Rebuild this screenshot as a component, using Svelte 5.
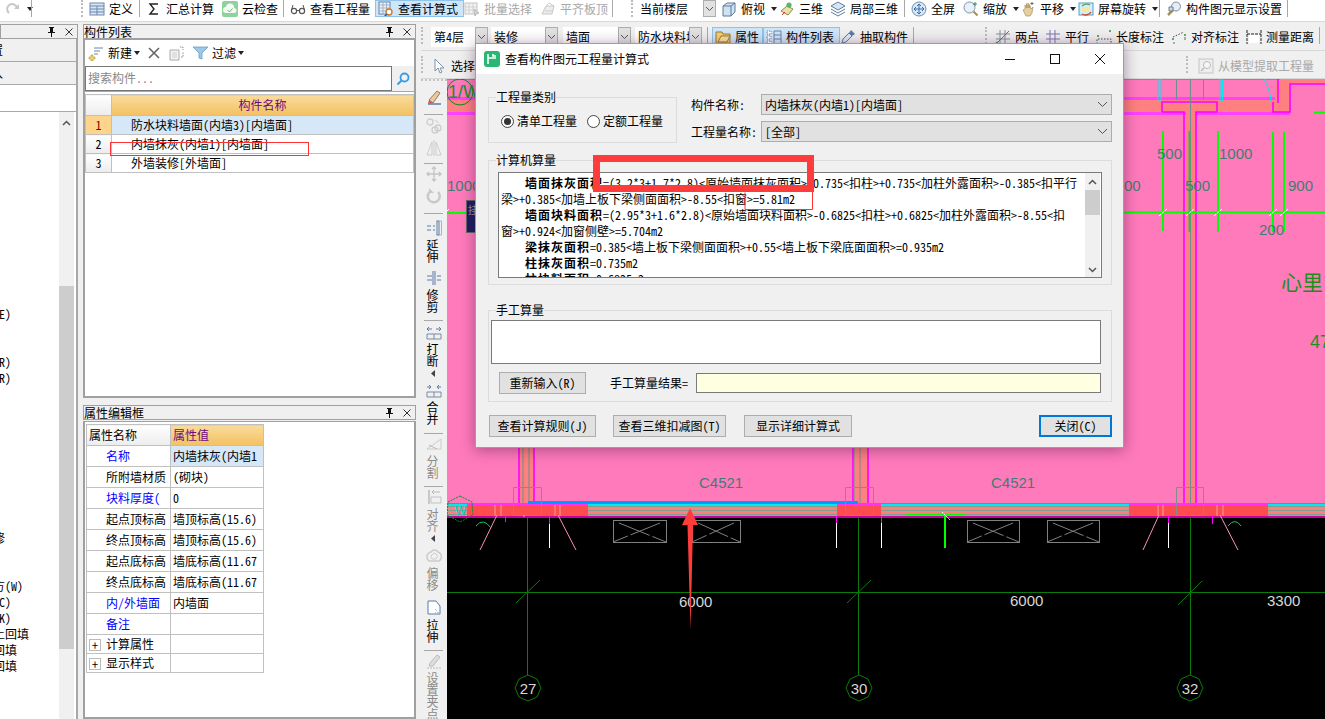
<script>
  // toolbar data: x is the left edge in page pixels, width comes from the next item
  const icons = {
    redo: '<path d="M4 12a5 5 0 1 1 8-5" fill="none" stroke="#c8c8c8" stroke-width="2"/><path d="M14 3v5h-5z" fill="#c8c8c8"/>',
    def: '<rect x="1" y="2" width="14" height="12" fill="#dbe6f4" stroke="#6b86ad"/><path d="M1 5h14M1 8h14M1 11h14M8 5v9" stroke="#6b86ad" fill="none"/>',
    sigma: '<path d="M12 3H4l4 5-4 5h8" fill="none" stroke="#222" stroke-width="1.4"/>',
    cloud: '<rect x="0" y="0" width="16" height="16" rx="2" fill="#8fd39c"/><path d="M4 12a3 3 0 0 1 0-6 4 4 0 0 1 8 1 2.5 2.5 0 0 1 0 5z" fill="#f4fbf5"/><path d="M5.5 9l2 2 3-3.5" stroke="#62b874" fill="none"/>',
    glasses: '<circle cx="4" cy="10" r="2.6" fill="none" stroke="#555" stroke-width="1.2"/><circle cx="12" cy="10" r="2.6" fill="none" stroke="#555" stroke-width="1.2"/><path d="M6.5 9.5h3M1.5 9L3 4M14.5 9L13 4" stroke="#555" fill="none"/>',
    calc: '<rect x="1" y="1" width="11" height="12" fill="#eef3fa" stroke="#6c84a6"/><path d="M1 4h11M1 7h11M1 10h11M5 1v12M8.500 1v12" stroke="#9fb1c9"/><circle cx="11" cy="11" r="3" fill="#fff" stroke="#c87a1c" stroke-width="1.300"/><path d="M9 13l-3 3" stroke="#3a5a8c" stroke-width="1.600"/>',
    batch: '<rect x="1" y="2" width="12" height="11" fill="#f2f2f2" stroke="#c4c4c4"/><path d="M1 6h12M1 9h12M5 2v11M9 2v11" stroke="#d2d2d2"/><path d="M10 8l5 4-3 .5-1 2.500z" fill="#d8d8d8" stroke="#bbb"/>',
    slab: '<path d="M2 13l4-8h8l-2 8z" fill="#ececec" stroke="#c8c8c8"/><path d="M6 5l3-3 5 3M5 10h8" stroke="#cfcfcf" fill="none"/>',
    box: '<path d="M2 5l4-3h8v9l-4 4H2z" fill="#cfe2f3" stroke="#5f7896"/><path d="M2 5h8v10M10 5l4-3" fill="none" stroke="#5f7896"/>',
    three: '<path d="M2 10l6-5 6 3-5 6z" fill="#e7e2a8" stroke="#8a8a50"/><circle cx="10" cy="4" r="2.600" fill="#59b56a"/><path d="M3 14l3-3" stroke="#c0392b"/>',
    iso: '<path d="M8 1l7 4-7 4-7-4z" fill="#d8e6f3" stroke="#5f7f9f"/><path d="M1 8l7 4 7-4M1 11l7 4 7-4" fill="none" stroke="#5f7f9f"/>',
    full: '<circle cx="8" cy="8" r="7" fill="#d8e8f8" stroke="#6f8fb0"/><path d="M8 3v10M3 8h10" stroke="#3a6ea5"/><path d="M6 5l2-2 2 2M6 11l2 2 2-2M5 6L3 8l2 2M11 6l2 2-2 2" fill="none" stroke="#3a6ea5"/>',
    zoom: '<circle cx="6.500" cy="6.500" r="5.500" fill="#e8f0f8" stroke="#7f93a8"/><path d="M10.500 10.500l4 4" stroke="#b08b4a" stroke-width="2"/><path d="M12 1v4M10 3h4" stroke="#3a8a4a"/>',
    hand: '<path d="M3 9l2-1V4l1.500 3V2.500L8 7V2l1.500 5V3.500L11 8l2-2-1 6-2 3H6z" fill="#e5cf9c" stroke="#a98f58" stroke-width=".7"/><path d="M12 1v3M10.500 2.500h3" stroke="#666"/>',
    rot: '<rect x="1" y="2" width="14" height="12" fill="#d6ecf8" stroke="#4ea0c8"/><path d="M4 6h8v5H4z" fill="#f4e9a4"/><path d="M13 11a6 5 0 0 1-9 2" fill="none" stroke="#d0492f" stroke-width="1.400"/><path d="M4 5a6 5 0 0 1 8-1" fill="none" stroke="#59a85f" stroke-width="1.400"/>',
    show: '<circle cx="10" cy="5.500" r="4.500" fill="#e6edf5" stroke="#7f8fa0"/><path d="M2 14l5-5" stroke="#a98f58" stroke-width="2.500"/><path d="M3 6h4v4H3z" fill="#cfd8e3" stroke="#6d7c8c"/>',
    attr: '<path d="M1 3h6l1 2h7v9H1z" fill="#f4cf75" stroke="#9a7a2e"/><path d="M3 13l3-6h9l-3 6z" fill="#f9e2a0" stroke="#9a7a2e"/>',
    list: '<path d="M1 2h4v3H1zM1 7h4v3H1zM1 12h4v3H1z" fill="#fff" stroke="#6d84a6" stroke-dasharray="1 1"/><path d="M8 2h7v13H8zM8 6h7M8 10h7" fill="none" stroke="#6d84a6"/>',
    pipette: '<path d="M2 14l1-4 6-6 3 3-6 6z" fill="#dceaf6" stroke="#5a7ca8"/><path d="M9 4l2-3 4 4-3 2z" fill="#5a7ca8"/>',
    two: '<path d="M1 5h14M1 10h14M5 1v14M10 1v14" stroke="#8a8f9f"/><path d="M2 14L14 2" stroke="#c8503c"/><circle cx="2" cy="14" r="1.500" fill="#5aa05a"/>',
    par: '<path d="M1 5h14M1 10h14M5 1v14M10 1v14" stroke="#7d76b0"/>',
    len: '<path d="M1 15v-5h14v5" fill="none" stroke="#444" stroke-dasharray="1.500 1.500"/><rect x="1" y="6" width="2" height="2" fill="#5fae5f"/><rect x="13" y="1" width="2" height="2" fill="#5fae5f"/>',
    ali: '<path d="M2 8l11-5" stroke="#444" stroke-dasharray="1.500 1.500" fill="none"/><rect x="1" y="9" width="2" height="2" fill="#5fae5f"/><rect x="13" y="5" width="2" height="2" fill="#5fae5f"/><path d="M3 13v2M14 8v3" stroke="#666"/>',
    meas: '<path d="M1 1v14M15 1v14M1 5h14" stroke="#222" fill="none" stroke-dasharray="3 1"/><rect x="3" y="6" width="10" height="8" fill="#fff"/>',
    arrow: '<path d="M4 1v12l3-3 2 5 2-1-2-4h4z" fill="#fff" stroke="#7d93b0"/>',
    model: '<rect x="1" y="1" width="14" height="14" fill="#eee" stroke="#c4c4c4"/><circle cx="9" cy="7" r="3.500" fill="#f6f6f6" stroke="#bbb"/><path d="M6 10l-3 3" stroke="#bbb" stroke-width="1.500"/>',
    brush: '<path d="M3 11l8-9 3 2-7 10z" fill="#e9c9a0" stroke="#9a7a5a"/><path d="M2 15h13" stroke="#5a7ca8" stroke-width="1.500"/><path d="M3 11l4 3-5 1z" fill="#d9534f"/>',
    rings: '<circle cx="4" cy="4" r="3" fill="none" stroke="#ccc" stroke-width="1.300"/><circle cx="9" cy="12" r="3" fill="none" stroke="#ccc" stroke-width="1.300"/><circle cx="12" cy="10" r="3" fill="none" stroke="#ccc" stroke-width="1.300"/><path d="M9 2l4 3" stroke="#ccc"/>',
    mirror: '<path d="M6 2L1 15h5zM10 2l5 13h-5zM8 0v16" fill="none" stroke="#ccc"/>',
    move: '<path d="M8 1v14M1 8h14M6 3l2-2 2 2M6 13l2 2 2-2M3 6L1 8l2 2M13 6l2 2-2 2" fill="none" stroke="#c4c4c4" stroke-width="1.300"/>',
    spin: '<path d="M12 4a6 6 0 1 1-7-1" fill="none" stroke="#c8c8c8" stroke-width="2.500"/><path d="M3 0v5h5z" fill="#c8c8c8"/>',
    extend: '<path d="M1 6h4M1 10h4M7 6h2M7 10h2" stroke="#5a7ca8"/><rect x="11" y="1" width="2" height="14" fill="none" stroke="#5a7ca8"/><path d="M13.500 1h2v14h-2" fill="none" stroke="#9fb6d2"/>',
    trim: '<path d="M1 6h5M1 10h5M11 6h4M11 10h4" stroke="#5a7ca8"/><path d="M7 1v14M9 1v14" stroke="#5a7ca8"/>',
    cut: '<path d="M1 5h5M3 3L1 5l2 2M15 5h-5M13 3l2 2-2 2" fill="none" stroke="#5a7ca8"/><path d="M1 10h14v5H1zM8 10v5" fill="none" stroke="#7a8aa0"/>',
    merge: '<path d="M5 5H1M3 3l2 2-2 2M11 5h4M13 3l-2 2 2 2" fill="none" stroke="#5a7ca8"/><path d="M1 10h14v5H1zM8 10v5" fill="none" stroke="#7a8aa0"/>',
    split: '<path d="M1 13L15 3M1 13h14M15 3v10" fill="none" stroke="#ccc"/><path d="M3 9l8 4" stroke="#bbb"/>',
    align: '<path d="M3 1v14" stroke="#bbb" stroke-width="1.500"/><path d="M5 8h10v6H5z" fill="none" stroke="#c2c2c2"/><path d="M14 3H6M8 1L6 3l2 2" fill="none" stroke="#bbb"/>',
    off: '<path d="M3 13a5 5 0 0 1 2-9 4 4 0 0 1 7 0 5 5 0 0 1 1 9z" fill="none" stroke="#ccc" stroke-width="1.500"/><path d="M6 11a3 3 0 0 1 1-5 2 2 0 0 1 3 0 3 3 0 0 1 0 5z" fill="none" stroke="#ccc"/>',
    stretch: '<path d="M2 1h8l4 5v8H2z" fill="#fff" stroke="#5a7ca8"/><path d="M9 9l5 5M9 13h5" stroke="#8fa6c4" stroke-dasharray="1 1"/>',
    pin2: '<path d="M3 13l1-3 7-8 3 2-7 9z" fill="#ddd" stroke="#bbb"/><path d="M1 15h14" stroke="#bbb" stroke-dasharray="2 1"/>'
  };

  const withWidths = (items, end) =>
    items.map((it, i) => ({ ...it, w: (items[i + 1] ? items[i + 1].x : end) - it.x }));

  const row1 = withWidths([
    { x: 0, t: 'gap' }, { x: 5, icon: 'redo', label: '', caret: true, dis: true }, { x: 31, t: 'sep' },
    { x: 81, t: 'grip' }, { x: 89, icon: 'def', label: '定义' }, { x: 139, t: 'sep' },
    { x: 146, icon: 'sigma', label: '汇总计算' }, { x: 222, icon: 'cloud', label: '云检查' }, { x: 283, t: 'sep' },
    { x: 290, icon: 'glasses', label: '查看工程量' }, { x: 375, icon: 'calc', label: '查看计算式', on: true },
    { x: 464, icon: 'batch', label: '批量选择', dis: true }, { x: 540, icon: 'slab', label: '平齐板顶', dis: true },
    { x: 612, t: 'sep' }, { x: 631, t: 'grip' }, { x: 637, t: 'combo', label: '当前楼层' }, { x: 721, icon: 'box', label: '俯视', caret: true },
    { x: 779, icon: 'three', label: '三维' }, { x: 830, icon: 'iso', label: '局部三维' }, { x: 904, t: 'sep' },
    { x: 911, icon: 'full', label: '全屏' }, { x: 963, icon: 'zoom', label: '缩放', caret: true },
    { x: 1020, icon: 'hand', label: '平移', caret: true }, { x: 1078, icon: 'rot', label: '屏幕旋转', caret: true },
    { x: 1159, t: 'sep' }, { x: 1166, icon: 'show', label: '构件图元显示设置' }, { x: 1287, t: 'sep' }
  ], 1325);

  const row2 = withWidths([
    { x: 421, t: 'grip' }, { x: 431, t: 'combo', label: '第4层', cw: 57 }, { x: 491, t: 'combo', label: '装修', cw: 67 },
    { x: 563, t: 'combo', label: '墙面', cw: 68 }, { x: 635, t: 'combo', label: '防水块料墙', cw: 67 }, { x: 707, t: 'sep' },
    { x: 712, icon: 'attr', label: '属性', on: true }, { x: 763, icon: 'list', label: '构件列表', on: true },
    { x: 840, icon: 'pipette', label: '抽取构件' }, { x: 913, t: 'sep' }, { x: 985, t: 'grip' },
    { x: 995, icon: 'two', label: '两点' }, { x: 1045, icon: 'par', label: '平行' }, { x: 1096, icon: 'len', label: '长度标注' },
    { x: 1171, icon: 'ali', label: '对齐标注' }, { x: 1246, icon: 'meas', label: '测量距离' }, { x: 1319, t: 'sep' }
  ], 1325);

  const row3 = withWidths([
    { x: 421, t: 'grip' }, { x: 431, icon: 'arrow', label: '选择' }, { x: 1186, t: 'grip' },
    { x: 1198, icon: 'model', label: '从模型提取工程量', dis: true }
  ], 1325);

  const vtools = [
    { h: 8 }, { h: 21, icon: 'brush' }, { h: 8, sep: true }, { h: 22, icon: 'rings' }, { h: 20, icon: 'mirror' },
    { h: 6, sep: true }, { h: 22, icon: 'move' }, { h: 22, icon: 'spin' }, { h: 6, sep: true }, { h: 4 },
    { h: 50, icon: 'extend', text: '延伸' }, { h: 46, icon: 'trim', text: '修剪' }, { h: 8, sep: true },
    { h: 58, icon: 'cut', text: '打断', caret: true }, { h: 48, icon: 'merge', text: '合并' }, { h: 6, sep: true },
    { h: 47, icon: 'split', text: '分割', dis: true }, { h: 6, sep: true },
    { h: 54, icon: 'align', text: '对齐', caret: true, dis: true }, { h: 52, icon: 'off', text: '偏移', dis: true, pad: true },
    { h: 52, icon: 'stretch', text: '拉伸', pad: true }, { h: 6, sep: true }, { h: 80, icon: 'pin2', text: '设置夹点', dis: true }
  ];

  // right-aligned remains of the tree behind the clipped left panel (22 rows of 16px)
  const tree = Array.from({ length: 23 }, () => ({ text: '', end: 0 }));
  tree[0] = { text: '(E)', end: 11 };
  tree[3] = { text: '(R)', end: 11 };
  tree[4] = { text: '(R)', end: 11 };
  tree[14] = { text: '装修', end: 5 };
  tree[17] = { text: '地方(W)', end: 23 };
  tree[18] = { text: '(C)', end: 11 };
  tree[19] = { text: '(K)', end: 11 };
  tree[20] = { text: '土回填', end: 29 };
  tree[21] = { text: '回填', end: 17 };
  tree[22] = { text: '回填', end: 17 };

  const parts = [
    { n: '防水块料墙面(内墙3)[内墙面]', on: true },
    { n: '内墙抹灰(内墙1)[内墙面]' },
    { n: '外墙装修[外墙面]' }
  ];

  const props = [
    { k: '名称', v: '内墙抹灰(内墙1', blue: true, on: true },
    { k: '所附墙材质', v: '(砌块)' },
    { k: '块料厚度(', v: '0', blue: true },
    { k: '起点顶标高', v: '墙顶标高(15.6)' },
    { k: '终点顶标高', v: '墙顶标高(15.6)' },
    { k: '起点底标高', v: '墙底标高(11.67' },
    { k: '终点底标高', v: '墙底标高(11.67' },
    { k: '内/外墙面', v: '内墙面', blue: true },
    { k: '备注', v: '', blue: true },
    { k: '计算属性', v: '', plus: true },
    { k: '显示样式', v: '', plus: true }
  ];

  const windows = [[613, 53], [692, 48], [967, 52], [1047, 52]];
  const grids = [
    { x: 528, n: '27' }, { x: 859, n: '30' }, { x: 1190, n: '32' }
  ];
  const ticks = [1163, 1190, 1218, 1273, 1284];
</script>

{#snippet ico(name)}
  <svg class="ico" viewBox="0 0 16 16" width="16" height="16">{@html icons[name]}</svg>
{/snippet}

{#snippet bar(items)}
  {#each items as it}
    {#if it.t === 'sep'}
      <span class="sep" style="width:{it.w}px"></span>
    {:else if it.t === 'grip'}
      <span class="grip" style="width:{it.w}px"></span>
    {:else if it.t === 'gap'}
      <span style="width:{it.w}px"></span>
    {:else if it.t === 'combo'}
      <span class="slot" style="width:{it.w}px">
        <span class="combo" style="width:{it.cw || 79}px"><span class="combo-t">{it.label}</span><span class="combo-b"><svg width="9" height="6" viewBox="0 0 9 6"><path d="M1 1l3.500 3.500L8 1" fill="none" stroke="#555"/></svg></span></span>
      </span>
    {:else}
      <span class="slot" style="width:{it.w}px">
        <span class="btn" class:on={it.on} class:dis={it.dis}>
          {@render ico(it.icon)}
          {#if it.label}<span>{it.label}</span>{/if}
          {#if it.caret}<i class="caret"></i>{/if}
        </span>
      </span>
    {/if}
  {/each}
{/snippet}

{#snippet title(text)}
  <div class="ptitle">
    <span>{text}</span>
    <svg class="pin" width="9" height="10" viewBox="0 0 9 10"><path d="M2 0h5v1H6v4h2v1H5v4H4V6H1V5h2V1H2z" fill="#111"/></svg>
    <svg class="px" width="8" height="8" viewBox="0 0 8 8"><path d="M.5.5l7 7M7.500.5l-7 7" stroke="#333"/></svg>
  </div>
{/snippet}

<div class="app">
  <div class="top">{@render bar(row1)}</div>

  <div class="main">
    <aside class="left">
      {@render title('')}
      <div class="lrow clip"><span class="cut12">配置</span></div>
      <div class="lrow clip"><span class="cut12 small">入</span></div>
      <div class="lwhite"></div>
      <div class="tree">
        <div class="tree-list">
          {#each tree as r}
            <div class="tree-row" style="width:{r.end}px"><span>{r.text}</span></div>
          {/each}
        </div>
        <div class="lscroll">
          <svg class="up" width="9" height="6" viewBox="0 0 9 6"><path d="M1 5l3.500-3.500L8 5" fill="none" stroke="#555" stroke-width="1.500"/></svg>
          <div class="lthumb"></div>
        </div>
      </div>
    </aside>

    <section class="mid">
      {@render title('构件列表')}
      <div class="panel list-panel">
        <div class="ptools">
          <svg class="ico" viewBox="0 0 16 16" width="16" height="16"><path d="M6 3h9M6 6h6M6 9h4" stroke="#6b86ad" fill="none"/><path d="M3 10h2v2h2v2H5v2H3v-2H1v-2h2z" fill="#f3d36b" stroke="#b59636" stroke-width=".6"/></svg>
          <span class="t-new">新建</span><i class="caret"></i>
          <svg class="t-x" width="12" height="12" viewBox="0 0 12 12"><path d="M1 1l10 10M11 1L1 11" stroke="#666" stroke-width="1.600"/></svg>
          <svg class="t-copy" viewBox="0 0 16 16" width="16" height="16"><path d="M1 5h9v10H1z" fill="#f4f4f4" stroke="#aaa"/><path d="M3 8h5M3 10h5M3 12h5" stroke="#ccc"/><path d="M11 2h3v3M12 12h2V7" fill="none" stroke="#7d93b0" stroke-dasharray="1.500 1"/></svg>
          <svg class="t-filter" viewBox="0 0 15 14" width="15" height="14"><path d="M0 1h15L9 7v6l-3-1V7z" fill="#9cc7e6" stroke="#6f9dc0" stroke-width=".8"/></svg>
          <span class="t-filt">过滤</span><i class="caret"></i>
        </div>
        <div class="psearch">
          <div class="sinput">搜索构件...</div>
          <div class="sbtn"><svg width="14" height="14" viewBox="0 0 14 14"><circle cx="8.500" cy="5.500" r="4" fill="none" stroke="#3c9be0" stroke-width="1.800"/><path d="M5.500 8.500l-4 4" stroke="#3c9be0" stroke-width="2"/></svg></div>
        </div>
        <table class="grid gl">
          <thead><tr><th class="num"></th><th class="gold">构件名称</th></tr></thead>
          <tbody>
            {#each parts as p, i}
              <tr class:sel={p.on}>
                <td class="num">{i + 1}</td>
                <td class="pname">{p.n}</td>
              </tr>
            {/each}
          </tbody>
        </table>
      </div>

      <div class="gap7"></div>
      {@render title('属性编辑框')}
      <div class="panel prop-panel">
        <table class="grid gp">
          <thead><tr><th class="pk0">属性名称</th><th class="gold left-t">属性值</th></tr></thead>
          <tbody>
            {#each props as p}
              <tr class:short={p.plus}>
                <td class="pk" class:blue={p.blue}>
                  {#if p.plus}<span class="plus">+</span><span class="plus-t">{p.k}</span>{:else}{p.k}{/if}
                </td>
                <td class="pv" class:sel-v={p.on}>{p.v}</td>
              </tr>
            {/each}
          </tbody>
        </table>
      </div>
    </section>

    <section class="right">
      <div class="tbar">{@render bar(row2)}</div>
      <div class="tbar t3">{@render bar(row3)}</div>
      <div class="work">
        <nav class="vbar">
          {#each vtools as v}
            {#if v.sep}
              <div class="vsep" style="height:{v.h}px"></div>
            {:else}
              <div class="vitem" class:dis={v.dis} class:pad={v.pad} style="height:{v.h}px">
                {#if v.icon}{@render ico(v.icon)}{/if}
                {#if v.text}<span class="vtext">{v.text}</span>{/if}
                {#if v.caret}<svg class="vcaret" width="4" height="7" viewBox="0 0 4 7"><path d="M4 0v7L0 3.500z" fill="#444"/></svg>{/if}
              </div>
            {/if}
          {/each}
        </nav>

        <svg class="cad" viewBox="447 79 878 640" width="878" height="640">
          <rect x="447" y="79" width="878" height="438" fill="#ff7abb"/>
          <rect x="447" y="517" width="878" height="202" fill="#000"/>
          <path d="M447 79.500h878" stroke="#8c8c8c"/>

          <!-- top wall band -->
          <rect x="447" y="100" width="840" height="12" fill="#ff8080"/>
          <rect x="447" y="97" width="838" height="3" fill="#ff40ff"/>
          <rect x="447" y="112" width="843" height="3" fill="#ff40ff"/>
          <rect x="1280" y="79" width="45" height="5" fill="#ff8080"/>
          <rect x="1275" y="84" width="15" height="28" fill="#ff8080"/>
          <path d="M1162 112v-10h55v10h-21v393M1162 112h22v393" fill="none" stroke="#f0f" stroke-width="1.600"/>
          <path d="M1273 102v10h17V84h35M1278 79v24" fill="none" stroke="#f0f" stroke-width="1.600"/>
          <rect x="1186" y="112" width="9" height="393" fill="#ff8080"/>
          <path d="M1190.500 79v426M1176.500 79v21M1203.500 79v21" stroke="#6f8f8f" fill="none"/>
          <path d="M1158 79v22M1161 79v22M1220 79v22M1222.500 79v22M1264 79q6 10 7 23" stroke="#00e8f0" fill="none"/>
          <path d="M1163 131v100M1218 131v101M1273 132v100M1284 132v100M1124 212.500h201M1314 112.500h11" stroke="#0f0" stroke-width="2" fill="none"/>
          <path d="M1189.500 131v101" stroke="#3fb050" stroke-width="2"/>
          {#each ticks as t}<path d="M{t - 4} 216l8-7" stroke="#fff" stroke-dasharray="3 1"/>{/each}

          <g class="dim">
            <text x="1157" y="159">500</text><text x="1219" y="159">1000</text><text x="1124" y="191">00</text>
            <text x="1185" y="191">500</text><text x="1288" y="191">900</text><text x="1259" y="235">200</text>
            <text x="447" y="191">1000</text><text x="699" y="488">C4521</text><text x="991" y="488">C4521</text>
          </g>
          <text class="big" x="1281" y="290">心里</text>
          <text class="green" x="1310" y="348">47</text>

          <!-- top left mark -->
          <circle cx="460" cy="92" r="13" fill="none" stroke="#0a8a2a"/>
          <text class="green" x="448" y="98">1/W</text>
          <rect x="447" y="212" width="20" height="2" fill="#0f0"/>
          <path d="M447 211l2-2" stroke="#fff"/>
          <rect x="466.500" y="200.500" width="10" height="32" fill="#1c1c5e" stroke="#666"/>
          <text class="nav" x="468" y="214">挂</text>

          <!-- wall columns into the bottom strip -->
          {#each [[526, 519, 534], [857, 853, 868]] as c}
            <rect x={c[1]} y="440" width={c[2] - c[1]} height="65" fill="#ff8080"/>
            <path d="M{c[1]} 440v65M{c[2]} 440v65" stroke="#f0f" stroke-width="1.600"/>
            <path d="M{c[0] - 3} 440v65M{c[0] + 3} 440v65" stroke="#6f8f8f"/>
          {/each}

          <rect x="447" y="503" width="878" height="14" fill="#ff30ff"/>
          <rect x="467" y="505" width="121" height="11" fill="#ff4d4d"/>
          <rect x="837" y="505" width="44" height="11" fill="#ff4d4d"/>
          <rect x="1129" y="505" width="139" height="11" fill="#ff4d4d"/>
          <rect x="447" y="504" width="20" height="13" fill="#ff7f7f"/>
          <rect x="588" y="504" width="249" height="13" fill="#ff7f7f"/>
          <rect x="881" y="504" width="248" height="13" fill="#ff7f7f"/>
          <rect x="1268" y="504" width="57" height="13" fill="#ff7f7f"/>
          <rect x="528" y="501" width="330" height="3" fill="#0099ff"/>
          {#each [[447, 467], [588, 837], [881, 1129], [1268, 1325]] as s}
            <path d="M{s[0]} 504.500H{s[1]}M{s[0]} 516.500H{s[1]}" stroke="#00e8f0"/>
            <path d="M{s[0]} 506.500H{s[1]}M{s[0]} 510.500H{s[1]}M{s[0]} 514.500H{s[1]}" stroke="#7f9f8f"/>
          {/each}
          <rect x="447" y="516" width="878" height="2" fill="#c800a0"/>
          <path d="M513.500 487.500h28v28h-28zM845.500 487.500h28v28h-28zM1176.500 487.500h27v28h-27z" fill="none" stroke="#8a8a8a"/>
          <path d="M524 515v2M495 505v11M501 505v11M555 505v11M560 505v11M1158 505v11M1163 505v11M1217 505v11M1223 505v11" stroke="#ffa0a0"/>

          <!-- end mark -->
          <path d="M460 496l12 6 1 13-13 7-13-7 1-13z" fill="none" stroke="#0a8a2a" stroke-dasharray="2 1"/>
          <text class="cw" x="455" y="515">W</text>

          <!-- below the wall -->
          <path d="M447 592.500h878M527.500 517v158M858.500 517v158M1190.500 517v158" stroke="#0a7a0a" fill="none"/>
          <path d="M516 603l24-23M847 603l24-23M1178 605l24-24" stroke="#0a7a0a"/>
          <path d="M497 515l-17 35M558 515l18 35M1159 515l-16 35M1220 515l18 35" stroke="#ff90b0"/>
          <path d="M549.500 524v24M836.500 523v25M881.500 523v25M1168.500 523v25" stroke="#fff"/>
          <path d="M505.500 516v6M549.500 516v8M836.500 516v7M881.500 516v7M1168.500 516v7M1212.500 516v8" stroke="#f0f"/>
          <path d="M476 526q7-9 15 2M1228 526q7-9 13 0" fill="none" stroke="#10c860"/>
          <path d="M906 514.500h60" stroke="#0f0" stroke-width="1.500"/>
          <path d="M945 515v33" stroke="#0f0" stroke-width="2"/>
          <path d="M942 512l8 8" stroke="#fff" stroke-dasharray="2 1"/>

          {#each windows as [x, w]}
            <g fill="none" stroke="#808080">
              <rect x={x + 0.5} y="520.500" width={w} height="22"/>
              <path d="M{x} 542L{x + w - 6} 523" stroke-dasharray="16 3 80"/>
              <path d="M{x + 6} 523L{x + w} 542" stroke-dasharray="33 3 80"/>
            </g>
          {/each}

          {#each grids as g}
            <path d="M{g.x} 675l9 4 4 9-4 9-9 4-9-4-4-9 4-9z" fill="none" stroke="#0a7a0a"/>
            <text class="wh" x={g.x} y="694" text-anchor="middle">{g.n}</text>
          {/each}
          <text class="wh" x="679" y="607">6000</text>
          <text class="wh" x="1010" y="606">6000</text>
          <text class="wh" x="1267" y="606">3300</text>

        </svg>
      </div>
    </section>
  </div>

  <div class="dialog">
    <header class="d-title">
      <svg width="16" height="16" viewBox="0 0 16 16"><rect width="16" height="16" rx="3" fill="#2bb673"/><path d="M4 3v10M4 7h8M9 3v2h3" stroke="#fff" stroke-width="1.600" fill="none"/></svg>
      <span class="d-name">查看构件图元工程量计算式</span>
      <div class="d-ctl">
        <svg width="10" height="10" viewBox="0 0 10 10"><path d="M0 5.500h10" stroke="#111"/></svg>
        <svg width="10" height="10" viewBox="0 0 10 10"><rect x=".5" y=".5" width="9" height="9" fill="none" stroke="#111"/></svg>
        <svg width="10" height="10" viewBox="0 0 10 10"><path d="M0 0l10 10M10 0L0 10" stroke="#111"/></svg>
      </div>
    </header>

    <div class="d-body">
      <div class="d-top">
        <fieldset class="g1">
          <legend>工程量类别</legend>
          <div class="radios">
            <label class="radio"><i class="dot on"></i>清单工程量</label>
            <label class="radio"><i class="dot"></i>定额工程量</label>
          </div>
        </fieldset>
        <div class="fields">
          <div class="field"><span class="flabel">构件名称:</span><div class="select"><span>内墙抹灰(内墙1)[内墙面]</span><svg width="11" height="7" viewBox="0 0 11 7"><path d="M1 1l4.500 4.500L10 1" fill="none" stroke="#555"/></svg></div></div>
          <div class="field"><span class="flabel">工程量名称:</span><div class="select"><span>[全部]</span><svg width="11" height="7" viewBox="0 0 11 7"><path d="M1 1l4.500 4.500L10 1" fill="none" stroke="#555"/></svg></div></div>
        </div>
      </div>

      <fieldset class="g2">
        <legend>计算机算量</legend>
        <div class="calc">
          <div class="calc-text">
            <div class="ln ind"><b>墙面抹灰面积</b>=(3.2*3+1.7*2.8)&lt;原始墙面抹灰面积&gt;-0.735&lt;扣柱&gt;+0.735&lt;加柱外露面积&gt;-0.385&lt;扣平行</div>
            <div class="ln">梁&gt;+0.385&lt;加墙上板下梁侧面面积&gt;-8.55&lt;扣窗&gt;=5.81m2</div>
            <div class="ln ind"><b>墙面块料面积</b>=(2.95*3+1.6*2.8)&lt;原始墙面块料面积&gt;-0.6825&lt;扣柱&gt;+0.6825&lt;加柱外露面积&gt;-8.55&lt;扣</div>
            <div class="ln">窗&gt;+0.924&lt;加窗侧壁&gt;=5.704m2</div>
            <div class="ln ind"><b>梁抹灰面积</b>=0.385&lt;墙上板下梁侧面面积&gt;+0.55&lt;墙上板下梁底面面积&gt;=0.935m2</div>
            <div class="ln ind"><b>柱抹灰面积</b>=0.735m2</div>
            <div class="ln ind"><b>柱块料面积</b>=0.6825m2</div>
          </div>
          <div class="calc-scroll">
            <svg width="9" height="6" viewBox="0 0 9 6"><path d="M1 5l3.500-3.500L8 5" fill="none" stroke="#555" stroke-width="1.500"/></svg>
            <div class="calc-thumb"></div>
            <svg class="down" width="9" height="6" viewBox="0 0 9 6"><path d="M1 1l3.500 3.500L8 1" fill="none" stroke="#555" stroke-width="1.500"/></svg>
          </div>
        </div>
      </fieldset>

      <fieldset class="g3">
        <legend>手工算量</legend>
        <div class="manual"></div>
        <div class="manual-row">
          <button class="wbtn redo">重新输入(R)</button>
          <span class="res">手工算量结果=</span>
          <div class="resbox"></div>
        </div>
      </fieldset>

      <div class="d-foot">
        <button class="wbtn b1">查看计算规则(J)</button>
        <button class="wbtn b2">查看三维扣减图(T)</button>
        <button class="wbtn b3">显示详细计算式</button>
        <button class="wbtn close">关闭(C)</button>
      </div>
    </div>
  </div>

  <!-- red marks drawn over the screenshot -->
  <svg class="marks" viewBox="0 0 1325 719" width="1325" height="719">
    <rect x="596.500" y="158.500" width="214" height="30" fill="none" stroke="#ff3c3c" stroke-width="7"/>
    <path d="M745 192.500v17h67.500V192" fill="none" stroke="#f33"/>
    <rect x="110.500" y="142.500" width="198" height="13" fill="none" stroke="#f33"/>
    <path d="M690 508l8 17h-5l-2.500 105-3-105h-5.500z" fill="#ff3c3c"/>
  </svg>
</div>

<style>
  :global(body) { margin: 0; background: #f0f0f0; }

  .app {
    position: relative;
    width: 1325px;
    height: 719px;
    overflow: hidden;
    background: #f0f0f0;
    color: #000;
    font: 12px/14px "Noto Sans Mono CJK SC", "Noto Sans CJK SC", "Liberation Mono", monospace;
  }
  .ico { flex: none; display: block; }

  .top {
    display: flex;
    height: 17px;
    padding-bottom: 4px;
    border-bottom: 1px solid #d8d8d8;
    background: #fff;
  }
  .slot { display: flex; flex: none; align-items: flex-start; height: 100%; }
  .btn { display: inline-flex; align-items: center; gap: 4px; white-space: nowrap; height: 100%; }
  .btn.on { background: #cfe5f8; outline: 1px solid #8fc3ea; outline-offset: -1px; padding: 0 3px; align-self: stretch; flex: 1; }
  .btn.dis { color: #a8a8a8; }
  .caret { width: 0; height: 0; border: 3.5px solid transparent; border-top: 4px solid #222; border-bottom: 0; margin-left: 2px; flex: none; }
  .sep { flex: none; height: 17px; box-sizing: border-box; border-left: 1px solid #a8a8a8; }
  .grip { flex: none; height: 17px; box-sizing: border-box; border-left: 2px dotted #bcbcbc; }
  .combo { display: flex; height: 17px; background: #fff; align-items: center; }
  .combo-t { flex: 1; padding-left: 3px; overflow: hidden; white-space: nowrap; }
  .combo-b { display: flex; align-items: center; justify-content: center; width: 13px; height: 100%; flex: none; background: #e1e1e1; border: 1px solid #adadad; box-sizing: border-box; }

  .main { display: flex; height: 697px; }

  /* left clipped tree panel */
  .left { width: 78px; flex: none; padding-top: 2px; box-sizing: border-box; }
  .ptitle {
    display: flex;
    align-items: center;
    height: 15px;
    box-sizing: border-box;
    border: 1px solid #a0a0a0;
    background: #f0f0f0;
    line-height: 13px;
  }
  .ptitle span { flex: 1; }
  .pin { margin-right: 9px; }
  .px { margin-right: 4px; }
  .lrow { height: 22px; border-bottom: 1px solid #a8a8a8; border-right: 2px solid #a8a8a8; overflow: hidden; line-height: 22px; box-sizing: content-box; }
  .cut12 { display: block; margin-left: -21px; white-space: nowrap; }
  .cut12.small { margin-left: -9px; }
  .lwhite { height: 26px; background: #fff; border-right: 2px solid #a8a8a8; border-bottom: 1px solid #a8a8a8; }
  .tree { display: flex; height: 607px; background: #fff; border-right: 2px solid #a8a8a8; padding-right: 2px; }
  .tree-list { flex: 1; min-width: 0; padding-top: 194px; overflow: hidden; }
  .tree-row { display: flex; justify-content: flex-end; height: 16px; line-height: 16px; white-space: nowrap; overflow: hidden; }
  .tree-row span { flex: none; }
  .lscroll { width: 15px; flex: none; background: #f0f0f0; display: flex; flex-direction: column; align-items: center; padding-top: 8px; box-sizing: border-box; }
  .lthumb { width: 100%; height: 363px; margin-top: 160px; background: #cdcdcd; }

  /* middle panels */
  .mid { width: 333px; margin-left: 5px; flex: none; padding-top: 2px; box-sizing: border-box; display: flex; flex-direction: column; }
  .panel { border: 2px solid #a0a0a0; border-top-width: 1px; background: #fff; box-sizing: border-box; }
  .list-panel { height: 359px; }
  .gap7 { height: 7px; flex: none; }
  .prop-panel { flex: 1; margin-top: 1px; padding: 2px 0 0 1px; }
  .ptools { display: flex; align-items: center; height: 26px; padding-left: 3px; background: #fff; }
  .t-new { margin-left: 4px; }
  .t-x { margin-left: 8px; }
  .t-copy { margin-left: 9px; }
  .t-filter { margin-left: 8px; }
  .t-filt { margin-left: 4px; }
  .psearch { display: flex; height: 25px; background: #f0f0f0; border-bottom: 1px solid #a8a8a8; }
  .sinput { width: 307px; box-sizing: border-box; border: 1px solid #777; background: #fff; color: #888; line-height: 22px; padding-left: 2px; }
  .sbtn { flex: 1; display: flex; align-items: center; justify-content: center; }

  .grid { border-collapse: collapse; table-layout: fixed; background: #fff; }
  .grid th, .grid td { border: 1px solid #c0c0c0; padding: 0; font-weight: 400; white-space: nowrap; overflow: hidden; }
  .gl { width: 329px; margin: 2px 0 0 0; }
  .gl th { height: 20px; }
  .gl td { height: 18px; }
  .gl .num { width: 25px; text-align: center; background: linear-gradient(#fff, #ececec); }
  .gl tr.sel .num { background: #fdd48c; color: #800000; }
  .gl tr.sel .pname { background: #d6e8f7; }
  .gold { background: linear-gradient(#fadb9c, #f3c161); color: #6a0a80; }
  .pname { padding-left: 19px !important; }

  .gp { width: 178px; }
  .gp th { height: 20px; }
  .gp td { height: 20px; vertical-align: middle; }
  .gp tr.short td { height: 18px; }
  .pk0 { width: 81px; text-align: left; padding-left: 2px !important; background: linear-gradient(#fff, #ececec); }
  .left-t { text-align: left; padding-left: 2px !important; }
  .pk { padding-left: 19px !important; }
  .pk.blue { color: #0000ff; }
  .pv { padding-left: 2px !important; }
  .sel-v { background: #d6e8f7; }
  .plus { display: inline-block; width: 10px; height: 10px; line-height: 9px; margin-left: -17px; border: 1px solid #bbb; text-align: center; vertical-align: middle; }
  .plus-t { margin-left: 5px; }

  /* right side */
  .right { flex: 1; min-width: 0; margin-left: 5px; display: flex; flex-direction: column; }
  .tbar { display: flex; height: 29px; padding-top: 5px; box-sizing: border-box; border-bottom: 1px solid #d8d8d8; background: #f0f0f0; }
  .tbar .btn, .tbar .combo { height: 20px; }
  .t3 { height: 28px; }
  .work { flex: 1; display: flex; min-height: 0; }
  .vbar { width: 26px; flex: none; overflow: hidden; border-top: 2px dotted #c4c4c4; box-sizing: border-box; }
  .vsep { display: flex; align-items: center; padding: 0 4px 0 3px; }
  .vsep::after { content: ""; display: block; width: 100%; height: 1px; background: #a8a8a8; }
  .vitem { display: flex; flex-direction: column; align-items: center; gap: 3px; box-sizing: border-box; }
  .vitem.pad { padding-top: 5px; }
  .vitem.dis { color: #8a8a8a; }
  .vtext { width: 12px; line-height: 12px; word-break: break-all; text-align: center; margin-right: 3px; }
  .vcaret { margin-right: 3px; }

  .cad { display: block; flex: none; font-family: "Liberation Sans", sans-serif; }
  .dim text { fill: #3f7d72; font-size: 15px; }
  .big { fill: #1a8f1a; font: 21px "Noto Sans CJK SC", sans-serif; }
  .green { fill: #1a8f2a; font-size: 18px; }
  .cw { fill: #00d0d0; font-size: 12px; }
  .wh { fill: #d8d8d8; font-size: 15px; }
  .nav { fill: #999; font: 10px "Noto Sans CJK SC", sans-serif; }

  /* dialog */
  .dialog {
    position: absolute;
    left: 475px;
    top: 43px;
    width: 649px;
    height: 405px;
    box-sizing: border-box;
    border: 1px solid #5fb4c8;
    background: #f0f0f0;
    box-shadow: 0 2px 14px rgba(60, 20, 60, .45);
  }
  .d-title { display: flex; align-items: center; height: 30px; padding-left: 8px; background: #fff; }
  .d-name { margin-left: 5px; flex: 1; }
  .d-ctl { display: flex; gap: 35px; margin-right: 18px; }
  .d-body { padding: 0 11px 0 12px; }
  .d-top { display: flex; gap: 14px; padding-top: 16px; }
  fieldset { margin: 0; padding: 0; border: 1px solid #dcdcdc; box-sizing: border-box; min-width: 0; }
  legend { padding: 0; margin-left: 7px; line-height: 14px; }
  .g1 { width: 190px; height: 53px; }
  .radios { display: flex; gap: 10px; padding: 10px 0 0 12px; }
  .radio { display: flex; align-items: center; gap: 3px; }
  .dot { width: 11px; height: 11px; border: 1px solid #444; border-radius: 50%; background: #fff; box-sizing: content-box; position: relative; }
  .dot.on::after { content: ""; position: absolute; inset: 2px; border-radius: 50%; background: #333; }
  .fields { padding-top: 4px; display: flex; flex-direction: column; gap: 6px; }
  .field { display: flex; align-items: center; }
  .flabel { width: 70px; }
  .select { width: 351px; height: 21px; box-sizing: border-box; border: 1px solid #adadad; background: #e1e1e1; display: flex; align-items: center; justify-content: space-between; padding: 0 3px 0 3px; }

  .g2 { margin-top: 10px; height: 132px; width: 624px; }
  .calc { display: flex; margin: 5px 0 0 9px; width: 604px; height: 106px; box-sizing: border-box; border: 1px solid #7a7a7a; background: #fff; }
  .calc-text { flex: 1; min-width: 0; overflow: hidden; padding: 2px 0 0 2px; }
  .calc-text b { letter-spacing: 1px; }
  .ln { height: 16px; line-height: 16px; white-space: nowrap; }
  .ind { padding-left: 24px; }
  .calc-scroll { width: 15px; flex: none; margin: 0 1px 0 0; background: #f0f0f0; display: flex; flex-direction: column; align-items: center; padding-top: 6px; box-sizing: border-box; }
  .calc-thumb { width: 100%; height: 25px; margin-top: 5px; background: #cdcdcd; }
  .down { margin-top: auto; margin-bottom: 4px; }

  .g3 { margin-top: 18px; height: 99px; width: 624px; }
  .manual { margin: 3px 0 0 2px; width: 610px; height: 44px; box-sizing: border-box; border: 1px solid #7a7a7a; background: #fff; }
  .manual-row { display: flex; align-items: center; padding: 8px 0 0 10px; }
  .wbtn { font: inherit; height: 22px; padding: 0; box-sizing: border-box; border: 1px solid #adadad; background: #e1e1e1; color: #000; text-align: center; }
  .redo { width: 87px; }
  .res { margin-left: 24px; width: 86px; }
  .resbox { width: 405px; height: 20px; box-sizing: border-box; border: 1px solid #7a7a7a; background: #ffffe1; }

  .d-foot { display: flex; margin-top: 13px; padding-left: 1px; }
  .b1 { width: 107px; }
  .b2 { width: 113px; margin-left: 17px; }
  .b3 { width: 108px; margin-left: 18px; }
  .close { width: 73px; margin-left: auto; border: 2px solid #0078d7; }

  .marks { position: absolute; left: 0; top: 0; pointer-events: none; }
</style>
